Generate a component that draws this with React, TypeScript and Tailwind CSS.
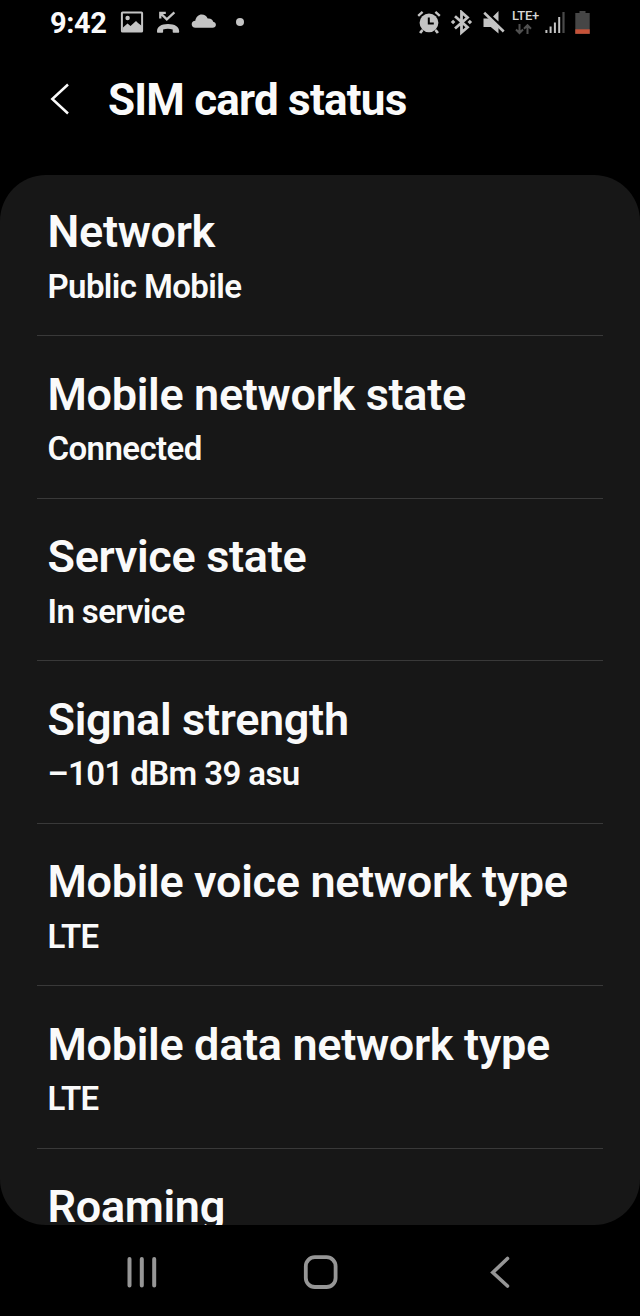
import React from "react";

const rows = [
  { title: "Network", value: "Public Mobile" },
  { title: "Mobile network state", value: "Connected" },
  { title: "Service state", value: "In service" },
  { title: "Signal strength", value: "–101 dBm 39 asu" },
  { title: "Mobile voice network type", value: "LTE" },
  { title: "Mobile data network type", value: "LTE" },
];

const StatusBar = () => {
  return (
    <header className="flex h-[46px] items-start pt-[10px] text-[#c4c4c4]">
      <span className="ml-[50px] w-[70px] text-[29px] font-bold leading-[26px] tracking-[-0.4px] text-[#fafafa]">9:42</span>
      {/* picture */}
      <svg width="24" height="26" viewBox="0 0 24 26" fill="none">
        <rect x="1.9" y="2.6" width="20.2" height="19" rx="0.6" stroke="currentColor" strokeWidth="2" />
        <circle cx="7.6" cy="8" r="2.2" fill="currentColor" />
        <path d="M3 17.500l4.500-4 3 2.500 5.500-5 2 2 4 3V21.500H3z" fill="currentColor" />
      </svg>
      {/* missed call */}
      <svg className="ml-[12px]" width="24" height="26" viewBox="0 0 24 26" fill="none">
        <path d="M4.300 8.500V2.800h5.500M4.400 3.200l6.400 6.200 7.600-7" stroke="currentColor" strokeWidth="2.300" />
        <path d="M1 21.500c0-4.700 4.200-7.400 11-7.400s11.200 2.700 11.200 7.400c0 .9-.3 1.300-.9 1.300h-4.800c-.6 0-.8-.3-.8-.8v-2.500c-3-.9-6.600-.9-9.600 0V22c0 .5-.3.800-.8.800H1.900c-.6 0-.9-.4-.9-1.300z" fill="currentColor" />
      </svg>
      {/* cloud */}
      <svg className="ml-[11px]" width="26" height="26" viewBox="0 0 26 26" fill="currentColor">
        <path d="M4.500 17.700C2 17.700.7 16.200.7 14.300c0-2 1.500-3.400 3.600-3.500C5 7 7.500 4.600 10.700 4.600c2.700 0 4.900 1.400 6 3.900 3-.4 5.100 1.100 5.500 3.300 1.700.3 2.700 1.500 2.700 2.900 0 1.800-1.400 3-3.300 3z" />
      </svg>
      <span className="ml-[19px] mt-[8px] size-[8px] rounded-full bg-current" />
      <div className="ml-auto flex items-start pr-[49px]">
        {/* alarm */}
        <svg width="24" height="26" viewBox="0 0 24 26" fill="none" stroke="currentColor">
          <path d="M1.200 5.800l4.400-4M22.800 5.800l-4.400-4" strokeWidth="2.400" />
          <path d="M5.500 20l-2.400 3M18.500 20l2.400 3" strokeWidth="2.800" />
          <circle cx="12" cy="12.800" r="9.400" fill="currentColor" stroke="none" />
          <path d="M11.800 7.500v6h5" stroke="#000" strokeWidth="2" />
        </svg>
        {/* bluetooth */}
        <svg className="ml-[9px]" width="24" height="26" viewBox="0 0 24 26" fill="none">
          <path d="M5 6.200l12.500 11-6 5.300V2.200l6 5.300L5 18.500" stroke="currentColor" strokeWidth="2.800" />
          <path d="M.8 12l2.300-2.300L5.400 12l-2.300 2.300zM17.500 12l2.300-2.300 2.300 2.300-2.300 2.300z" fill="currentColor" />
        </svg>
        {/* muted speaker */}
        <svg className="ml-[8px]" width="24" height="26" viewBox="0 0 24 26">
          <path d="M1.500 8.500h5.300l9.700 8.500v6.400L8.800 17H1.500zM11 6.500L16.500 1v10.500z" fill="currentColor" />
          <path d="M2.200 2.800l19.500 18.700" stroke="currentColor" strokeWidth="2.600" />
        </svg>
        <div className="ml-[6px] w-[29px]">
          <p className="whitespace-nowrap text-[13px] font-medium leading-[11px] tracking-[-0.2px] text-[#d6d6d6]">LTE+</p>
          <svg className="ml-[3px] mt-[3px]" width="18" height="11" viewBox="0 0 18 11" fill="none" stroke="#505050" strokeWidth="2">
            <path d="M4.500 0v9M1 5.500L4.500 9 8 5.500M12.500 10V1M9 4.700l3.500-3.500L16 4.700" />
          </svg>
        </div>
        {/* signal bars, the last one inactive */}
        <svg className="ml-[4px]" width="21" height="26" viewBox="0 0 21 26" fill="currentColor">
          <path d="M.4 20h2v3h-2zM4.600 16.500h2V23h-2zM8.900 12.500h2V23h-2zM13.200 7h2v16h-2z" />
          <path d="M17.400 2h2.200v21h-2.200z" fill="#4a4a4a" />
        </svg>
        <svg className="ml-[9px]" width="16" height="26" viewBox="0 0 16 26">
          <path d="M4.500 1h6v2h4.200v20.800H.3V3h4.200z" fill="#464646" />
          <path d="M.3 19.300h14.400v4.500H.3z" fill="#c65238" />
        </svg>
      </div>
    </header>
  );
};

const NavigationBar = () => {
  return (
    <nav className="flex h-[91px] items-center justify-between px-[124px] pt-[2px] text-[#969696]">
      <svg width="36" height="36" viewBox="0 0 36 36" stroke="currentColor" strokeWidth="4" strokeLinecap="round">
        <path d="M5.500 5v26.500M17.800 5v26.500M30.200 5v26.500" />
      </svg>
      <svg width="36" height="36" viewBox="0 0 36 36" fill="none" stroke="currentColor" strokeWidth="3.800">
        <rect x="3.800" y="3.200" width="29.800" height="29.800" rx="9" />
      </svg>
      <svg width="36" height="36" viewBox="0 0 36 36" fill="none" stroke="currentColor" strokeWidth="3.600" strokeLinecap="round">
        <path d="M27.500 4.500L12.800 18.500l14.700 13.500" />
      </svg>
    </nav>
  );
};

export default function App() {
  return (
    <div className="flex h-[1316px] w-[640px] flex-col overflow-hidden bg-black font-['Roboto',sans-serif] text-[#fafafa]">
      <StatusBar />
      <div className="flex h-[129px] items-start pl-[48px] pt-[27px]">
        <svg className="mt-[10px]" width="24" height="32" viewBox="0 0 24 32" fill="none" stroke="currentColor" strokeWidth="2.500">
          <path d="M20 1.500L4.300 16 20 30.500" />
        </svg>
        <h1 className="ml-[36px] mt-px whitespace-nowrap text-[44px] font-bold leading-[52px] tracking-[-0.8px]">SIM card status</h1>
      </div>
      <main className="h-[1050px] overflow-hidden rounded-[46px] bg-[#171717] px-[37px]">
        <div className="-mt-[1.500px]">
          {rows.map((row) => (
            <section key={row.title} className="h-[162.500px] border-b border-[#393939] pl-[10.500px] pt-[32.500px]">
              <h2 className="whitespace-nowrap text-[45px] font-semibold leading-[52px] tracking-[-0.33px]">{row.title}</h2>
              <p className="mt-[8.500px] whitespace-nowrap text-[33px] font-semibold leading-[40px] tracking-[-0.6px]">{row.value}</p>
            </section>
          ))}
          <section className="pl-[10.500px] pt-[32.500px]">
            <h2 className="text-[45px] font-semibold leading-[52px] tracking-[-0.33px]">Roaming</h2>
          </section>
        </div>
      </main>
      <NavigationBar />
    </div>
  );
}
